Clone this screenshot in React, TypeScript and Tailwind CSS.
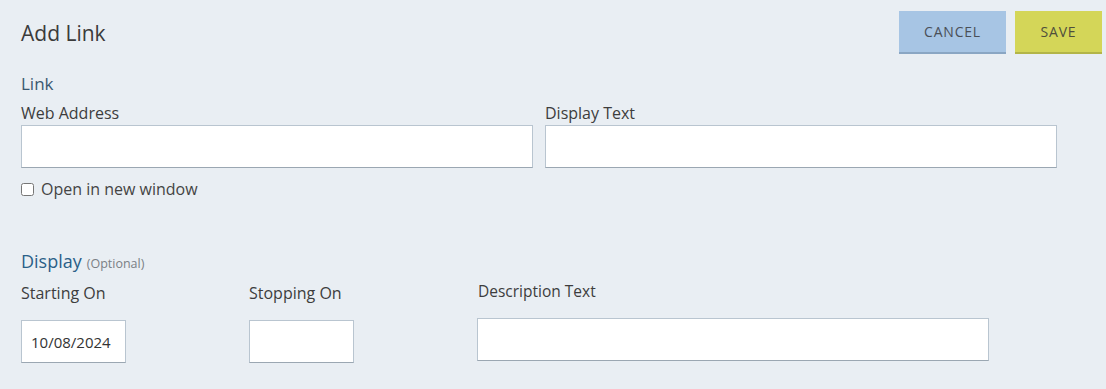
import React from 'react';

const font = { fontFamily: '"Open Sans", "Noto Sans", sans-serif' };

const inputCls =
  'block h-[43px] bg-white border border-[#b9c5d0] border-b-[#9ba7b2] px-[9px] text-[15px] text-[#333] outline-none';

const App = () => {
  return (
    <div className="min-h-[389px] w-[1106px] bg-[#e9eef3] pl-[21px] pr-[4px] pt-[11px]" style={font}>
      <div className="flex items-center justify-between">
        <h1 className="text-[21px] leading-[26px] text-[#3b3b3b] font-normal">Add Link</h1>
        <div className="flex gap-[9px]">
          <button className="h-[43px] w-[107px] bg-[#a7c5e4] border-b-2 border-[#8aa6c3] text-[14px] tracking-[0.8px] text-[#4a4f57] uppercase">
            Cancel
          </button>
          <button className="h-[43px] w-[87px] bg-[#d4d658] border-b-2 border-[#b3b548] text-[14px] tracking-[0.8px] text-[#4f4e3c] uppercase">
            Save
          </button>
        </div>
      </div>

      <div className="mt-[20px] text-[17px] leading-[20px] text-[#3a5870]">Link</div>

      <div className="mt-[9px] flex gap-[12px] w-[1036px]">
        <div className="flex-1">
          <label className="block text-[16px] leading-[20px] text-[#3d3d3d]">Web Address</label>
          <input className={`${inputCls} w-full mt-[2px]`} />
        </div>
        <div className="flex-1">
          <label className="block text-[16px] leading-[20px] text-[#3d3d3d]">Display Text</label>
          <input className={`${inputCls} w-full mt-[2px]`} />
        </div>
      </div>

      <label className="mt-[11px] flex items-center gap-[7px] h-[20px] text-[16px] text-[#444]">
        <input type="checkbox" className="w-[13px] h-[13px]" />
        Open in new window
      </label>

      <div className="mt-[51px] flex items-baseline gap-[5px] h-[22px] leading-[22px]">
        <span className="text-[18px] text-[#2b5f88]">Display</span>
        <span className="text-[12.5px] text-[#7a7f85]">(Optional)</span>
      </div>

      <div className="flex items-start">
        <div className="w-[228px] mt-[11px]">
          <label className="block text-[16px] leading-[20px] text-[#3d3d3d]">Starting On</label>
          <input className={`${inputCls} w-[105px] mt-[17px]`} defaultValue="10/08/2024" />
        </div>
        <div className="w-[228px] mt-[11px]">
          <label className="block text-[16px] leading-[20px] text-[#3d3d3d]">Stopping On</label>
          <input className={`${inputCls} w-[105px] mt-[17px]`} />
        </div>
        <div className="mt-[9px]">
          <label className="block pl-[1px] text-[15.5px] leading-[20px] text-[#3d3d3d]">Description Text</label>
          <input className={`${inputCls} w-[512px] mt-[17px]`} />
        </div>
      </div>
    </div>
  );
};

export default App;
